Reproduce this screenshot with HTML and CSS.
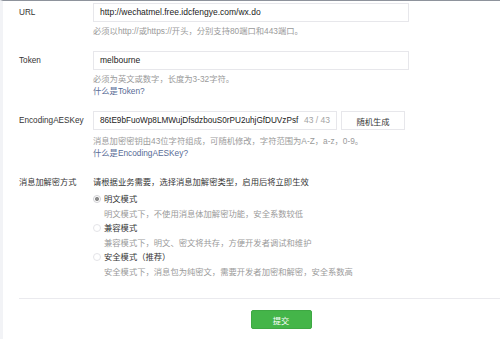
FILE: index.html
```html
<!DOCTYPE html>
<html lang="zh-CN">
<head>
  <meta charset="UTF-8">
  <title>服务器配置</title>
  <link rel="stylesheet" href="styles.css">
</head>
<body>
  <div class="page">
    <div class="form">
      <div class="row row-url">
        <label class="row-label">URL</label>
        <div class="row-body">
          <div class="input">http://wechatmel.free.idcfengye.com/wx.do</div>
          <p class="hint">必须以http://或https://开头，分别支持80端口和443端口。</p>
        </div>
      </div>

      <div class="row row-token">
        <label class="row-label">Token</label>
        <div class="row-body">
          <div class="input">melbourne</div>
          <p class="hint">必须为英文或数字，长度为3-32字符。</p>
          <a class="link" href="#">什么是Token?</a>
        </div>
      </div>

      <div class="row row-aes">
        <label class="row-label">EncodingAESKey</label>
        <div class="row-body">
          <div class="key-line">
            <div class="input input-key">
              <span class="key-text">86tE9bFuoWp8LMWujDfsdzbouS0rPU2uhjGfDUVzPsf</span>
              <span class="counter">43 / 43</span>
            </div>
            <button class="btn-default">随机生成</button>
          </div>
          <p class="hint hint-aes">消息加密密钥由43位字符组成，可随机修改，字符范围为A-Z，a-z，0-9。</p>
          <a class="link" href="#">什么是EncodingAESKey?</a>
        </div>
      </div>

      <div class="row row-mode">
        <label class="row-label">消息加解密方式</label>
        <div class="row-body">
          <p class="intro">请根据业务需要，选择消息加解密类型，启用后将立即生效</p>
          <div class="option">
            <div class="option-title"><span class="radio checked"></span>明文模式</div>
            <p class="option-desc">明文模式下，不使用消息体加解密功能，安全系数较低</p>
          </div>
          <div class="option">
            <div class="option-title"><span class="radio"></span>兼容模式</div>
            <p class="option-desc">兼容模式下，明文、密文将共存，方便开发者调试和维护</p>
          </div>
          <div class="option">
            <div class="option-title"><span class="radio"></span>安全模式（推荐）</div>
            <p class="option-desc">安全模式下，消息包为纯密文，需要开发者加密和解密，安全系数高</p>
          </div>
        </div>
      </div>
    </div>

    <div class="footer">
      <button class="btn-primary">提交</button>
    </div>
  </div>
</body>
</html>
```

FILE: styles.css
```css
body {
  margin: 0;
  font-family: "Liberation Sans", "Noto Sans CJK SC", sans-serif;
  font-size: 8.3px;
  color: #353535;
  background: #fff;
}

.page {
  height: 338px;
  border-top: 1px solid #8e939c;
  border-left: 3px solid #f2f3f6;
  overflow: hidden;
}

.form {
  padding: 2px 0 0 16px;
}

.row {
  display: flex;
}

.row-label {
  width: 74px;
  flex-shrink: 0;
  font-size: 8.2px;
  line-height: 19px;
  color: #353535;
}

.row-body {
  flex: 1;
}

.input {
  box-sizing: border-box;
  width: 316px;
  height: 19px;
  border: 1px solid #e7e7eb;
  padding: 0 6px;
  font-size: 8.5px;
  line-height: 17px;
  color: #222;
  white-space: nowrap;
}

.hint {
  margin: 3px 0 0;
  line-height: 12px;
  color: #9a9a9a;
}

.link {
  display: block;
  line-height: 12px;
  color: #576b95;
  text-decoration: none;
}

.row-url {
  margin-bottom: 14px;
}

.row-token {
  margin-bottom: 14px;
}

.row-aes {
  margin-bottom: 14px;
}

.key-line {
  display: flex;
  gap: 4px;
}

.input-key {
  width: 244px;
  display: flex;
  justify-content: space-between;
  padding-right: 6px;
}

.key-text {
  font-size: 8.2px;
}

.counter {
  color: #a3a3a3;
}

.btn-default {
  width: 64px;
  height: 19px;
  border: 1px solid #e7e7eb;
  background: #fff;
  font-family: inherit;
  font-size: 8.3px;
  color: #353535;
  padding: 0;
}

.hint-aes {
  margin-top: 5px;
}

.intro {
  margin: 0;
  line-height: 19px;
  color: #353535;
}

.option-title {
  display: flex;
  align-items: center;
  line-height: 14px;
}

.radio {
  box-sizing: border-box;
  width: 8px;
  height: 8px;
  margin-right: 3px;
  border: 1px solid #e4e4e8;
  border-radius: 50%;
  background: #fff;
}

.radio.checked {
  border-color: #d0d0d4;
  background: radial-gradient(circle, #8d8d8d 0 1.8px, #fff 2.3px);
}

.option-desc {
  margin: 1px 0 0 11px;
  line-height: 14px;
  color: #9a9a9a;
}

.footer {
  margin: 19px 0 0 16px;
  border-top: 1px solid #eaeaee;
  padding-top: 11px;
  display: flex;
  justify-content: center;
  padding-left: 43px;
}

.btn-primary {
  width: 61px;
  height: 19px;
  border: 1px solid #3ea843;
  border-radius: 2px;
  background: #44b549;
  color: #fff;
  font-family: inherit;
  font-size: 8.3px;
  padding: 0;
}
```
